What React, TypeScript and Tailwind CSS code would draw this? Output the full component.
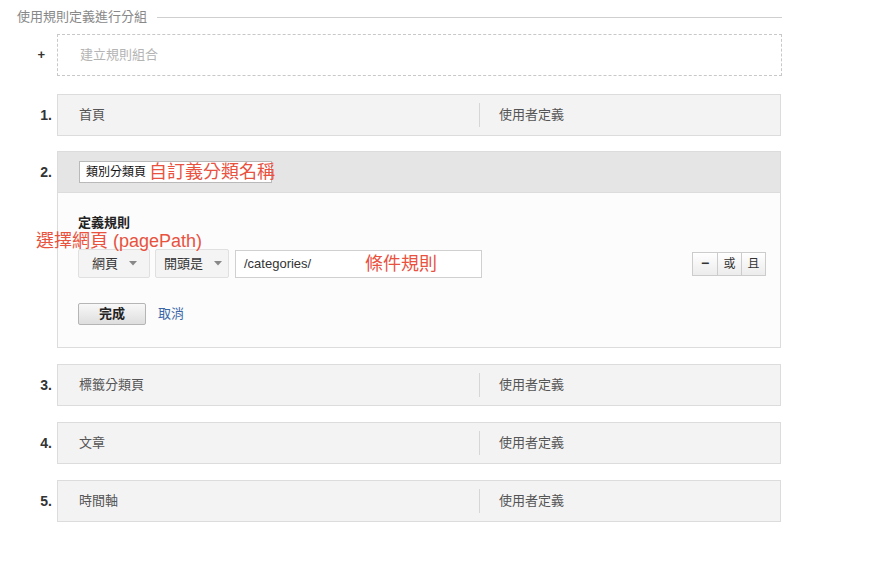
const font = { fontFamily: '"Liberation Sans", "Noto Sans CJK TC", sans-serif' }

const rows = [
  { n: '3.', name: '標籤分類頁' },
  { n: '4.', name: '文章' },
  { n: '5.', name: '時間軸' },
]

function Caret() {
  return (
    <svg width="8" height="5" viewBox="0 0 8 5" className="shrink-0">
      <path d="M0 0 L8 0 L4 4.5 Z" fill="#888" />
    </svg>
  )
}

function Num({ n }: { n: string }) {
  return (
    <div className="w-[40px] shrink-0 h-[42px] flex items-center justify-end pr-[5px] text-[14px] font-bold text-[#333]">
      {n}
    </div>
  )
}

function CollapsedRow({ n, name }: { n: string; name: string }) {
  return (
    <div className="flex">
      <Num n={n} />
      <div className="w-[724px] h-[42px] flex items-center bg-[#f3f3f3] border border-[#dcdcdc] text-[13px] text-[#555]">
        <div className="w-[421px] pl-[21px]">{name}</div>
        <div className="w-px h-[24px] bg-[#d6d6d6]" />
        <div className="pl-[19px]">使用者定義</div>
      </div>
    </div>
  )
}

function Select({ label, w, pl }: { label: string; w: string; pl: string }) {
  return (
    <div
      className={`${w} ${pl} h-[29px] flex items-center gap-[11px] bg-[#f4f4f4] border border-[#e0e0e0] rounded-[2px] text-[13px] text-[#333]`}
    >
      <span>{label}</span>
      <Caret />
    </div>
  )
}

export default function App() {
  return (
    <div className="w-[872px] h-[564px] bg-white pl-[17px] pt-[8px]" style={font}>
      <div className="w-[765px]">
        <div className="flex items-center h-[18px] text-[13px] text-[#888]">
          <span>使用規則定義進行分組</span>
          <div className="flex-1 ml-[10px] h-px bg-[#cfcfcf]" />
        </div>

        <div className="flex mt-[8px]">
          <div className="w-[40px] shrink-0 h-[42px] flex items-center justify-end pr-[12px] text-[13px] font-bold text-[#333]">
            +
          </div>
          <div className="w-[725px] h-[42px] flex items-center border border-dashed border-[#c8c8c8] pl-[22px] text-[13px] text-[#b4b4b4]">
            建立規則組合
          </div>
        </div>

        <div className="flex flex-col gap-[16px] mt-[18px]">
          <CollapsedRow n="1." name="首頁" />

          <div className="flex -mt-px">
            <Num n="2." />
            <div className="w-[724px] border border-[#dcdcdc]">
              <div className="h-[41px] flex items-center bg-[#e5e5e5] border-b border-[#dcdcdc] pl-[21px]">
                <div className="relative w-[193px] h-[22px] flex items-center bg-white border border-[#b9b9b9] pl-[6px] text-[12px] text-[#111]">
                  類別分類頁
                  <span className="absolute left-[69px] top-[-2px] text-[18px] leading-[24px] text-[#e8523f] whitespace-nowrap">
                    自訂義分類名稱
                  </span>
                </div>
              </div>

              <div className="relative bg-[#fcfcfc] pl-[20px] pr-[15px] pt-[21px] pb-[22px]">
                <div className="text-[13px] font-bold text-[#222] leading-[18px]">定義規則</div>
                <span className="absolute left-[-22px] top-[36px] text-[18px] leading-[24px] text-[#e8523f] whitespace-nowrap">
                  選擇網頁 (pagePath)
                </span>

                <div className="flex items-center mt-[17px]">
                  <Select label="網頁" w="w-[72px]" pl="pl-[13px]" />
                  <div className="ml-[5px]">
                    <Select label="開頭是" w="w-[74px]" pl="pl-[8px]" />
                  </div>
                  <div className="relative ml-[6px] w-[247px] h-[28px] flex items-center bg-white border border-[#d0d0d0] pl-[8px] text-[13px] text-[#333]">
                    /categories/
                    <span className="absolute left-[129px] top-[1px] text-[18px] leading-[24px] text-[#e8523f] whitespace-nowrap">
                      條件規則
                    </span>
                  </div>

                  <div className="ml-auto mr-[-1px] flex h-[24px] border border-[#cccccc] text-[12px] text-[#333] bg-gradient-to-b from-white to-[#ececec]">
                    <div className="w-[24px] flex items-center justify-center font-bold text-[14px]">−</div>
                    <div className="w-[24px] flex items-center justify-center border-l border-[#cccccc]">或</div>
                    <div className="w-[24px] flex items-center justify-center border-l border-[#cccccc]">且</div>
                  </div>
                </div>

                <div className="flex items-center mt-[25px]">
                  <div className="w-[68px] h-[22px] flex items-center justify-center border border-[#b5b5b5] rounded-[2px] bg-gradient-to-b from-[#f8f8f8] to-[#dedede] text-[13px] font-bold text-[#222]">
                    完成
                  </div>
                  <span className="ml-[12px] text-[13px] text-[#3a66a8]">取消</span>
                </div>
              </div>
            </div>
          </div>

          {rows.map((r) => (
            <CollapsedRow key={r.n} n={r.n} name={r.name} />
          ))}
        </div>
      </div>
    </div>
  )
}
